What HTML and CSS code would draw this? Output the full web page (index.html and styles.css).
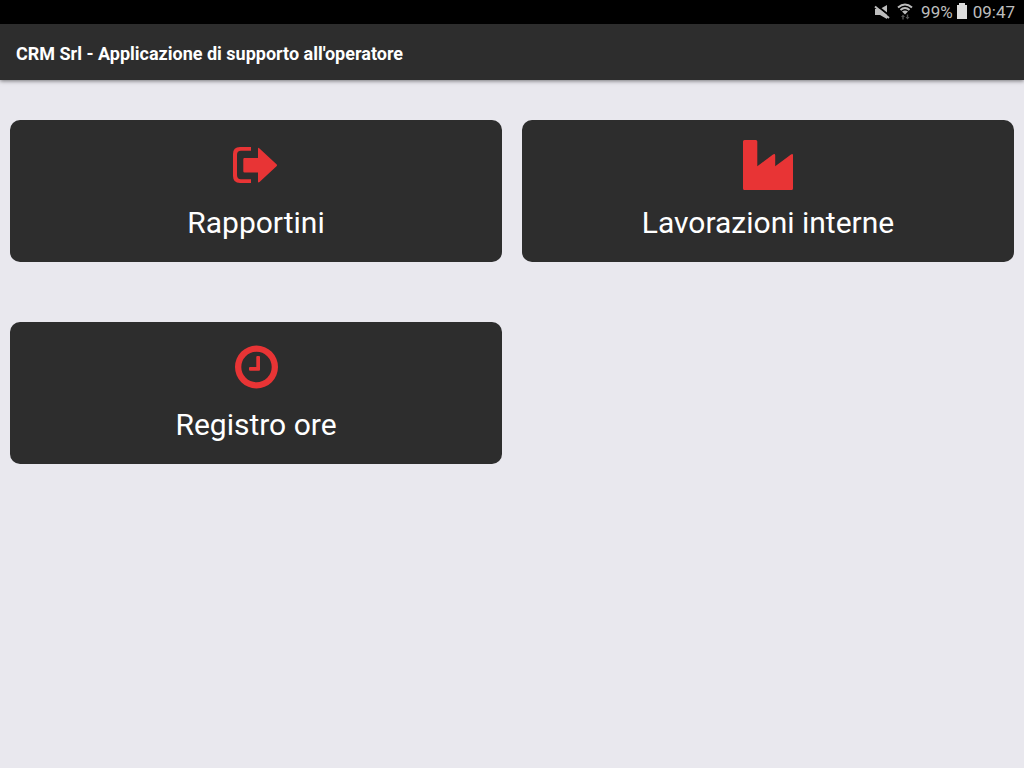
FILE: index.html
```html
<!DOCTYPE html>
<html lang="it">
<head>
<meta charset="utf-8">
<meta name="viewport" content="width=device-width, initial-scale=1">
<title>CRM Srl</title>
<link rel="stylesheet" href="styles.css">
</head>
<body>
<div class="status">
  <svg class="status-mute" width="16" height="16" viewBox="0 0 16 16" aria-hidden="true">
    <path class="light" d="M1 5H6L13 1V15L6 11H1Z"/>
    <path class="slash-gap" d="M2 1L16 12"/>
    <path class="slash" d="M1 2.500L15 14"/>
  </svg>
  <svg class="status-wifi" width="16" height="18" viewBox="0 0 16 18" aria-hidden="true">
    <path class="wave" d="M1 4.500Q8 -1.500 15 4.500M3.500 7Q8 3 12.500 7"/>
    <path class="light" d="M5 8.500Q8 6.500 11 8.500L8 11.500Z"/>
    <path class="dim" d="M4 14L6 11.500L8 14H6.700V16.500H5.300V14ZM8.500 14H9.800V11.500H11.200V14H12.500L10.500 16.500Z"/>
  </svg>
  <span>99%</span>
  <svg class="status-battery" width="10" height="16" viewBox="0 0 10 16" aria-hidden="true"><path d="M2 0H8V2H10V16H0V2H2Z"/></svg>
  <time>09:47</time>
</div>
<header class="appbar"><h1>CRM Srl - Applicazione di supporto all'operatore</h1></header>
<main class="menu">
  <button class="tile" type="button">
    <svg class="icon" viewBox="0 0 50 50" aria-hidden="true">
      <path d="M20 7H9Q2 7 2 14V36Q2 43 9 43H20V39.200H10Q6 39.200 6 35V15Q6 10.800 10 10.800H20Z"/>
      <path d="M13.500 18H27V9Q27 7 28.500 8.500L45.500 24.200Q46.500 25.200 45.500 26.200L28.500 42Q27 43 27 41.500V32.500H13.500Q12.300 32.500 12.300 31.300V19.200Q12.300 18 13.500 18Z"/>
    </svg>
    <span>Rapportini</span>
  </button>
  <button class="tile" type="button">
    <svg class="icon" viewBox="0 0 50 50" aria-hidden="true">
      <path d="M1.500 0H12.800Q14.300 0 14.300 1.500V26.300L30 14.500Q32.200 13.300 32.200 15.500V26.300L48 14.500Q50 13.300 50 15.500V48.500Q50 50 48.500 50H1.500Q0 50 0 48.500V1.500Q0 0 1.500 0Z"/>
    </svg>
    <span>Lavorazioni interne</span>
  </button>
  <button class="tile" type="button">
    <svg class="icon" viewBox="0 0 50 50" aria-hidden="true">
      <path fill-rule="evenodd" d="M25.500 3.500A21.500 21.500 0 1 1 25.500 46.500A21.500 21.500 0 1 1 25.500 3.500ZM25.500 9.800A15.200 15.200 0 1 0 25.500 40.200A15.200 15.200 0 1 0 25.500 9.800Z"/>
      <path d="M26.300 14H28Q29 14 29 15V27.700Q29 28.700 28 28.700H19Q18 28.700 18 27.700V26Q18 25 19 25H25.300V15Q25.300 14 26.300 14Z"/>
    </svg>
    <span>Registro ore</span>
  </button>
</main>
</body>
</html>
```
FILE: styles.css
```css
* { box-sizing: border-box; }

body {
  margin: 0;
  background: #e9e8ee;
  font-family: Roboto, sans-serif;
}

.status {
  display: flex;
  align-items: center;
  justify-content: flex-end;
  height: 24px;
  padding: 0 9px;
  background: #000;
  color: #bdbdbd;
  font-size: 17px;
  line-height: 24px;
}

.status-mute { margin-right: 7px; }
.status-wifi { margin-right: 8px; }
.status-battery { margin: 0 6px 2px 4px; fill: #dcdcdc; }
.light { fill: #bdbdbd; }
.dim { fill: #555; }
.wave { fill: none; stroke: #bdbdbd; stroke-width: 2; }
.slash-gap { stroke: #000; stroke-width: 2; }
.slash { stroke: #bdbdbd; stroke-width: 2; }

.appbar {
  display: flex;
  align-items: center;
  min-height: 56px;
  padding: 4px 16px 0;
  background: #2d2d2d;
  box-shadow: 0 1px 4px rgba(0, 0, 0, 0.5);
}

.appbar h1 {
  margin: 0;
  color: #fff;
  font-size: 18px;
  line-height: 24px;
  font-weight: 700;
}

.menu {
  display: grid;
  grid-template-columns: repeat(2, 1fr);
  gap: 60px 20px;
  padding: 40px 10px;
}

.tile {
  display: flex;
  flex-direction: column;
  align-items: center;
  gap: 15px;
  padding: 20px 20px 21px;
  border: 0;
  border-radius: 10px;
  background: #2d2d2d;
  color: #fff;
  font: 400 30px/36px Roboto, sans-serif;
  cursor: pointer;
}

.icon {
  width: 50px;
  height: 50px;
  fill: #e83435;
}
```
